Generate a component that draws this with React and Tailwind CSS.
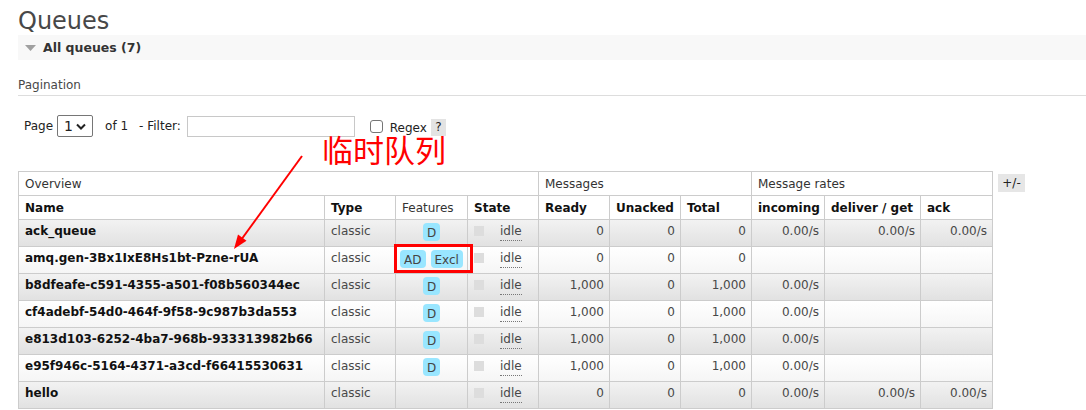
import React from "react";

const rows = [
  { name: "ack_queue", feats: ["D"], ready: "0", unacked: "0", total: "0", inc: "0.00/s", del: "0.00/s", ack: "0.00/s" },
  { name: "amq.gen-3Bx1IxE8Hs1bt-Pzne-rUA", feats: ["AD", "Excl"], ready: "0", unacked: "0", total: "0", inc: "", del: "", ack: "" },
  { name: "b8dfeafe-c591-4355-a501-f08b560344ec", feats: ["D"], ready: "1,000", unacked: "0", total: "1,000", inc: "0.00/s", del: "", ack: "" },
  { name: "cf4adebf-54d0-464f-9f58-9c987b3da553", feats: ["D"], ready: "1,000", unacked: "0", total: "1,000", inc: "0.00/s", del: "", ack: "" },
  { name: "e813d103-6252-4ba7-968b-933313982b66", feats: ["D"], ready: "1,000", unacked: "0", total: "1,000", inc: "0.00/s", del: "", ack: "" },
  { name: "e95f946c-5164-4371-a3cd-f66415530631", feats: ["D"], ready: "1,000", unacked: "0", total: "1,000", inc: "0.00/s", del: "", ack: "" },
  { name: "hello", feats: [], ready: "0", unacked: "0", total: "0", inc: "0.00/s", del: "0.00/s", ack: "0.00/s" },
];

const td = "border border-[#cccccc] px-[6px] pt-[3px] align-top h-[27px] whitespace-nowrap";
const num = td + " text-right pr-[5px]";

export default function App() {
  return (
    <div
      className="relative w-[1086px] h-[410px] overflow-hidden bg-white pl-[18px] text-[12px] leading-[16px] text-[#484848]"
      style={{ fontFamily: '"DejaVu Sans", Verdana, sans-serif' }}
    >
      <h1 className="mt-[7px] text-[24px] leading-[28px] font-normal text-[#484848]">Queues</h1>

      <div className="h-[25px] bg-[#f8f8f8] flex items-center">
        <svg width="12" height="8" viewBox="0 0 12 8" className="ml-[7px]">
          <polygon points="0,1 11,1 5.5,7" fill="#a0a0a0" />
        </svg>
        <span className="ml-[6px] font-bold text-[12.5px] text-[#333]">All queues (7)</span>
      </div>

      <div className="mt-[17px] pb-[2px] border-b border-[#dddddd]">
        <span className="text-[#484848]">Pagination</span>
      </div>

      <div className="mt-[19px] h-[22px] flex items-center text-[#222]">
        <span className="ml-[6px]">Page</span>
        <div className="ml-[4px] w-[36px] h-[22px] border border-[#767676] rounded-[2px] flex items-center justify-between px-[6px] text-[14px]">
          <span>1</span>
          <svg width="10" height="7" viewBox="0 0 10 7">
            <polyline points="1,1.5 5,5.5 9,1.5" fill="none" stroke="#222" strokeWidth="2" />
          </svg>
        </div>
        <span className="ml-[12px]">of 1</span>
        <span className="ml-[11px]">- Filter:</span>
        <div className="ml-[6px] w-[168px] h-[21px] border border-[#c8c8c8]"></div>
        <div className="ml-[15px] w-[13px] h-[13px] border border-[#767676] rounded-[3px] bg-white"></div>
        <span className="ml-[7px] mt-[4px]">Regex</span>
        <span className="ml-[4px] mt-[2px] w-[15px] h-[17px] bg-[#e3e3e3] flex items-center justify-center">?</span>
      </div>

      <div className="mt-[34px] flex items-start">
        <table className="table-fixed border-collapse w-[974px]">
          <colgroup>
            <col className="w-[306px]" />
            <col className="w-[71px]" />
            <col className="w-[72px]" />
            <col className="w-[71px]" />
            <col className="w-[71px]" />
            <col className="w-[71px]" />
            <col className="w-[71px]" />
            <col className="w-[73px]" />
            <col className="w-[96px]" />
            <col className="w-[72px]" />
          </colgroup>
          <thead>
            <tr className="h-[24px] bg-white">
              <th colSpan={4} className="border border-[#cccccc] px-[6px] text-left font-normal text-[#333]">Overview</th>
              <th colSpan={3} className="border border-[#cccccc] px-[6px] text-left font-normal text-[#333]">Messages</th>
              <th colSpan={3} className="border border-[#cccccc] px-[6px] text-left font-normal text-[#333]">Message rates</th>
            </tr>
            <tr className="h-[24px] bg-white text-[#111]">
              <th className="border border-[#cccccc] px-[6px] text-left font-bold">Name</th>
              <th className="border border-[#cccccc] px-[6px] text-left font-bold">Type</th>
              <th className="border border-[#cccccc] px-[6px] text-left font-normal text-[#333]">Features</th>
              <th className="border border-[#cccccc] px-[6px] text-left font-bold">State</th>
              <th className="border border-[#cccccc] px-[6px] text-left font-bold">Ready</th>
              <th className="border border-[#cccccc] px-[6px] text-left font-bold">Unacked</th>
              <th className="border border-[#cccccc] px-[6px] text-left font-bold">Total</th>
              <th className="border border-[#cccccc] px-[6px] text-left font-bold">incoming</th>
              <th className="border border-[#cccccc] px-[6px] text-left font-bold whitespace-nowrap">deliver / get</th>
              <th className="border border-[#cccccc] px-[6px] text-left font-bold">ack</th>
            </tr>
          </thead>
          <tbody>
            {rows.map((r, i) => (
              <tr
                key={r.name}
                className={
                  i % 2 === 0
                    ? "bg-linear-to-b from-[#f2f2f2] to-[#e1e1e1]"
                    : "bg-linear-to-b from-[#ffffff] to-[#f5f5f5]"
                }
              >
                <td className={td + " font-bold text-[#111]"}>{r.name}</td>
                <td className={td}>classic</td>
                <td className={td + " text-center pt-[3px]"}>
                  <div className="flex justify-center gap-[5px]">
                    {r.feats.map((f) => (
                      <span key={f} className="inline-block bg-[#99e6ff] rounded-[4px] px-[4px] h-[18px] leading-[20px] text-[#444]">
                        {f}
                      </span>
                    ))}
                  </div>
                </td>
                <td className={td}>
                  <div className="flex items-start">
                    <span className="mt-[3px] w-[10px] h-[10px] bg-[#dddddd]"></span>
                    <span className="ml-[16px] border-b border-dotted border-[#777] leading-[17px]">idle</span>
                  </div>
                </td>
                <td className={num}>{r.ready}</td>
                <td className={num}>{r.unacked}</td>
                <td className={num}>{r.total}</td>
                <td className={num}>{r.inc}</td>
                <td className={num}>{r.del}</td>
                <td className={num}>{r.ack}</td>
              </tr>
            ))}
          </tbody>
        </table>
        <div className="ml-[5px] mt-[3px] w-[27px] h-[18px] bg-[#e6e6e6] flex items-center justify-center text-[#222]">+/-</div>
      </div>

      {/* annotations */}
      <div
        className="absolute left-[322px] top-[133px] text-[31px] leading-[32px] text-[#ff0000]"
        style={{ fontFamily: '"Noto Sans CJK SC", sans-serif' }}
      >
        临时队列
      </div>
      <div className="absolute left-[394px] top-[244px] w-[79px] h-[29px] border-[3px] border-[#ff0000]"></div>
      <svg className="absolute left-0 top-0 pointer-events-none" width="1086" height="410">
        <line x1="302" y1="156" x2="241" y2="240" stroke="#ff0000" strokeWidth="2" />
        <polygon points="234,249 246.5,240.8 238,234.5" fill="#ff0000" />
      </svg>
    </div>
  );
}
